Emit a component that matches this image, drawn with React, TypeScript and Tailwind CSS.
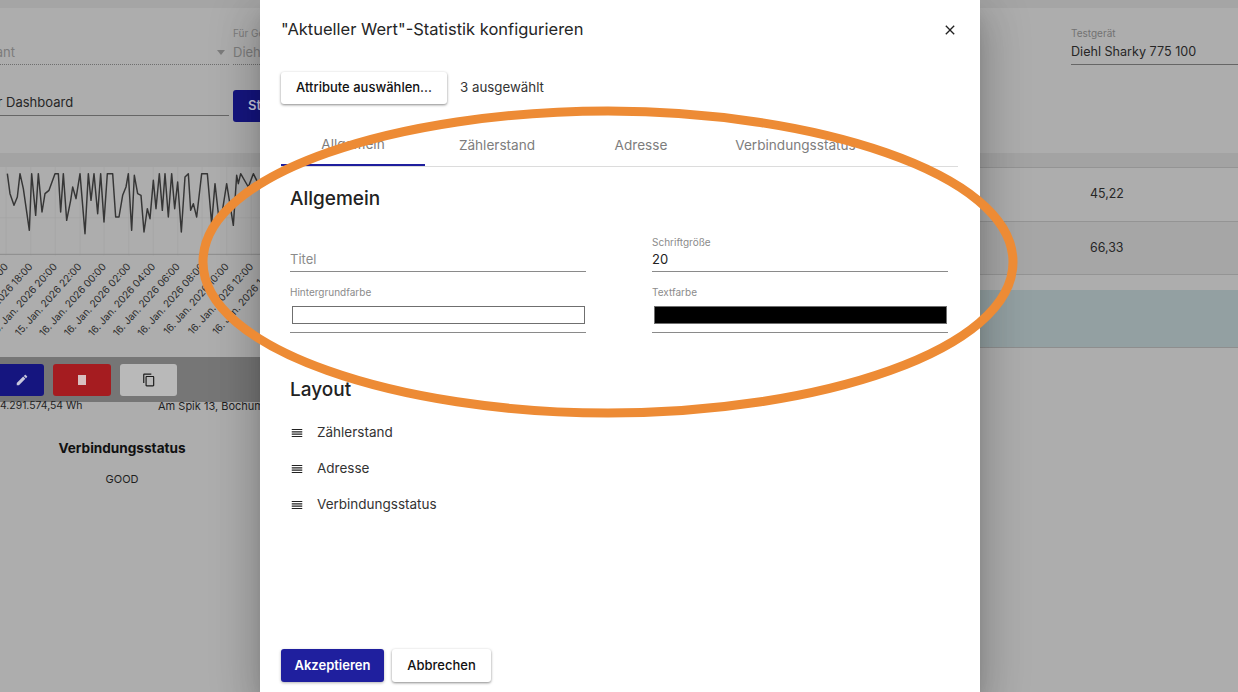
import type { ReactNode } from 'react';

const CHART_LINE =
  '22,20 30,80 42,115 52,90 60,20 70,65 88,190 95,20 107,145 115,20 126,135 135,80 147,70 165,20 175,20 182,135 190,20 200,160 212,100 218,60 228,95 240,20 255,200 265,20 273,100 282,20 293,140 302,20 312,165 322,20 338,20 347,150 357,150 368,85 378,60 385,20 395,190 403,25 413,80 423,85 432,195 442,125 450,155 460,40 468,125 478,20 487,130 495,20 505,150 515,20 524,125 533,45 544,195 555,30 565,20 572,130 580,110 590,150 605,20 622,20 635,170 645,50 655,140 665,145 680,50 700,175 710,25 715,50 722,20 745,60 760,20 780,60';

const TICKS = [18, 92, 166, 240, 312, 386, 460, 533, 606, 680, 754];
const TICK_LABELS = [
  '15. Jan. 2026 16:00',
  '15. Jan. 2026 18:00',
  '15. Jan. 2026 20:00',
  '15. Jan. 2026 22:00',
  '16. Jan. 2026 00:00',
  '16. Jan. 2026 02:00',
  '16. Jan. 2026 04:00',
  '16. Jan. 2026 06:00',
  '16. Jan. 2026 08:00',
  '16. Jan. 2026 10:00',
  '16. Jan. 2026 12:00',
  '16. Jan. 2026 14:00',
];

const CARD_SHADOW = 'shadow-[0_1px_3px_rgba(0,0,0,0.35),0_1px_2px_rgba(0,0,0,0.15)]';

function Chart() {
  return (
    <svg width="260" height="180" viewBox="0 0 780 540" className="block" style={{ fontFamily: 'Inter, sans-serif' }}>
      {TICKS.map((x) => (
        <line key={x} x1={x} y1="0" x2={x} y2="265" stroke="#a4a4a4" strokeWidth="2" />
      ))}
      <line x1="0" y1="152" x2="780" y2="152" stroke="#a4a4a4" strokeWidth="2" />
      <line x1="0" y1="262" x2="780" y2="262" stroke="#8c8c8c" strokeWidth="3" />
      <polyline points={CHART_LINE} fill="none" stroke="#363636" strokeWidth="4.4" strokeLinejoin="round" />
      {TICK_LABELS.map((label, i) => (
        <text
          key={label}
          textAnchor="end"
          fontSize="30"
          fill="#2c2c2c"
          transform={`translate(${18 + i * 73.6 + 8} 300) rotate(-48)`}
        >
          {label}
        </text>
      ))}
    </svg>
  );
}

function ToolButton({ className, children }: { className: string; children: ReactNode }) {
  return <div className={`flex h-8 items-center justify-center rounded-[3px] ${className}`}>{children}</div>;
}

function Background() {
  return (
    <div className="flex h-full flex-col bg-[#adadad] text-[#262626]">
      <div className="h-2 bg-[#a5a5a5]" />

      <div className="flex h-[145px] justify-between overflow-hidden">
        <div className="w-[420px] shrink-0">
          <div className="mt-[19px] flex gap-1">
            <div className="flex h-[38px] w-[229px] items-end border-b border-dotted border-[#6e6e6e] pb-[4px]">
              <span className="-ml-[39px] text-[13px] leading-4 text-[#7c7c7c]">Mandant</span>
              <span className="mb-[5px] ml-auto mr-[4px] h-0 w-0 border-x-[4px] border-t-[5px] border-x-transparent border-t-[#7c7c7c]" />
            </div>
            <div className="flex h-[38px] flex-1 flex-col border-b border-dotted border-[#6e6e6e]">
              <span className="text-[10px] leading-3 text-[#7c7c7c]">Für Gerät</span>
              <span className="mt-[5px] text-[13px] leading-4 text-[#7c7c7c]">Diehl</span>
            </div>
          </div>
          <div className="mt-[25px] flex gap-1">
            <div className="flex h-[26px] w-[229px] items-end border-b border-[#666] pb-[5px]">
              <span className="-ml-[15px] text-[13px] leading-4">für Dashboard</span>
            </div>
            <div className="flex h-8 w-24 items-center rounded-[3px] bg-[#15157f] pl-[15px] text-[13px] font-semibold text-[#c8c8dc]">
              Statistik
            </div>
          </div>
        </div>
        <div className="mt-[19px] h-[38px] w-[167px] shrink-0 border-b border-[#666]">
          <div className="text-[10px] leading-3 text-[#727272]">Testgerät</div>
          <div className="mt-[5px] text-[12.6px] leading-4">Diehl Sharky 775 100</div>
        </div>
      </div>

      <div className="h-[14px] bg-[#a3a3a3]" />

      <div className="flex flex-1 justify-between overflow-hidden">
        <div className="w-[300px] shrink-0">
          <div className="h-[190px] overflow-hidden bg-[#adadad]">
            <Chart />
          </div>
          <div className="flex h-[45px] items-center gap-[9px] bg-[#767676] pl-0">
            <ToolButton className="w-11 rounded-l-none bg-[#15157f]">
              <svg width="14" height="14" viewBox="0 0 24 24" fill="#c8c8dc">
                <path d="M3 17.25V21h3.75L17.81 9.94l-3.75-3.75L3 17.25zM20.71 7.04c.39-.39.39-1.02 0-1.41l-2.34-2.34c-.39-.39-1.02-.39-1.41 0l-1.83 1.83 3.75 3.75 1.83-1.83z" />
              </svg>
            </ToolButton>
            <ToolButton className="w-[58px] bg-[#a51c20]">
              <span className="block h-[10px] w-2 bg-[#d8c0c0]" />
            </ToolButton>
            <ToolButton className="w-[57px] bg-[#b9b9b9]">
              <svg width="14" height="14" viewBox="0 0 24 24" fill="#1c1c1c">
                <path d="M16 1H4c-1.1 0-2 .9-2 2v14h2V3h12V1zm3 4H8c-1.1 0-2 .9-2 2v14c0 1.1.9 2 2 2h11c1.1 0 2-.9 2-2V7c0-1.1-.9-2-2-2zm0 16H8V7h11v14z" />
              </svg>
            </ToolButton>
          </div>
          <div className="flex text-[10.4px] leading-[8px] text-[#1f1f1f]">
            <span className="w-[158px] shrink-0">4.291.574,54 Wh</span>
            <span className="whitespace-nowrap text-[11px]">Am Spik 13, Bochum</span>
          </div>
          <div className="mt-[28px] w-[244px] text-center text-[13.6px] font-bold leading-5 text-[#111]">Verbindungsstatus</div>
          <div className="mt-[13px] w-[244px] text-center text-[11px] leading-4 text-[#1f1f1f]">GOOD</div>
        </div>

        <div className="w-[600px] shrink-0">
          <div className="flex h-[54px] items-center border-t border-[#949494] pl-[452px] text-[12.4px]">45,22</div>
          <div className="flex h-[54px] items-center border-y border-[#949494] bg-[#a6a6a6] pl-[452px] text-[12.4px]">66,33</div>
          <div className="mt-[15px] h-[58px] border-b border-[#8e8e8e] bg-[#93a0a2]" />
        </div>
      </div>
    </div>
  );
}

function TextField({ label, value, placeholder }: { label?: string; value?: string; placeholder?: string }) {
  return (
    <div className="flex h-[39px] flex-col justify-end border-b border-[#8a8a8a] pb-[2px]">
      {label && <span className="mb-[1px] text-[10px] leading-3 text-[#8b8b8b]">{label}</span>}
      <span className={`text-[13px] leading-5 ${value ? 'text-[#222]' : 'text-[#8b8b8b]'}`}>{value ?? placeholder}</span>
    </div>
  );
}

function ColorField({ label, swatch }: { label: string; swatch: string }) {
  return (
    <div className="mt-[14px] h-[47px] border-b border-[#8a8a8a]">
      <div className="text-[10px] leading-3 text-[#8b8b8b]">{label}</div>
      <div className={`ml-[2px] mr-[1px] mt-[8px] h-[18px] border border-[#6f6f6f] ${swatch}`} />
    </div>
  );
}

function LayoutRow({ label }: { label: string }) {
  return (
    <div className="flex h-9 items-center gap-[13px]">
      <svg width="14" height="14" viewBox="0 0 24 24" fill="#222" className="mt-[2px]">
        <path d="M3 15h18v-2H3v2zm0 4h18v-2H3v2zm0-8h18V9H3v2zm0-6v2h18V5H3z" />
      </svg>
      <span className="text-[13.5px] text-[#333]">{label}</span>
    </div>
  );
}

function Dialog() {
  return (
    <div className="absolute inset-y-0 left-[260px] flex w-[720px] flex-col bg-white pl-[21px] pr-[22px] shadow-[0_11px_15px_-7px_rgba(0,0,0,0.2),0_24px_38px_3px_rgba(0,0,0,0.14),0_9px_46px_8px_rgba(0,0,0,0.12)]">
      <div className="flex h-[58px] items-center justify-between">
        <h2 className="text-[16.5px] font-normal text-[#262626]">"Aktueller Wert"-Statistik konfigurieren</h2>
        <svg width="16" height="16" viewBox="0 0 24 24" fill="#222" className="mt-[2px]">
          <path d="M19 6.41 17.59 5 12 10.59 6.41 5 5 6.41 10.59 12 5 17.59 6.41 19 12 13.41 17.59 19 19 17.59 13.41 12z" />
        </svg>
      </div>

      <div className="mt-[14px] flex items-center gap-[13px]">
        <div className={`flex h-8 w-[166px] items-center justify-center rounded-[3px] bg-white text-[13px] font-medium text-[#111] ${CARD_SHADOW}`}>
          Attribute auswählen...
        </div>
        <span className="text-[13.3px] text-[#333]">3 ausgewählt</span>
      </div>

      <div className="mt-[21px] flex h-[42px] border-b border-[#dcdcdc] text-[13.6px] text-[#7d7d7d]">
        <div className="flex w-[144px] items-center justify-center border-b-2 border-[#1f1f9e]">Allgemein</div>
        <div className="flex w-[144px] items-center justify-center">Zählerstand</div>
        <div className="flex w-[144px] items-center justify-center">Adresse</div>
        <div className="flex w-[165px] items-center justify-center">Verbindungsstatus</div>
      </div>

      <div className="pl-[9px] pr-[10px]">
        <h3 className="mt-[20px] text-[19px] font-medium leading-6 text-[#222]">Allgemein</h3>
        <div className="mt-[22px] grid grid-cols-[296px_296px] justify-between">
          <div>
            <TextField placeholder="Titel" />
            <ColorField label="Hintergrundfarbe" swatch="bg-white" />
          </div>
          <div>
            <TextField label="Schriftgröße" value="20" />
            <ColorField label="Textfarbe" swatch="bg-black" />
          </div>
        </div>
        <h3 className="mt-[45px] text-[19px] font-medium leading-6 text-[#222]">Layout</h3>
        <div className="mt-[12px]">
          <LayoutRow label="Zählerstand" />
          <LayoutRow label="Adresse" />
          <LayoutRow label="Verbindungsstatus" />
        </div>
      </div>

      <div className="mb-[10px] mt-auto flex gap-2">
        <div className="flex h-[33px] w-[103px] items-center justify-center rounded-[3px] bg-[#1f1f9e] text-[13px] font-semibold text-white shadow-[0_1px_3px_rgba(0,0,0,0.3)]">
          Akzeptieren
        </div>
        <div className={`flex h-[33px] w-[99px] items-center justify-center rounded-[3px] bg-white text-[13px] font-medium text-[#111] ${CARD_SHADOW}`}>
          Abbrechen
        </div>
      </div>
    </div>
  );
}

export default function App() {
  return (
    <div className="relative h-[692px] w-[1238px] overflow-hidden font-['Inter',sans-serif]">
      <Background />
      <Dialog />
      {/* hand-drawn annotation on top of the screenshot */}
      <svg className="pointer-events-none absolute inset-0" width="1238" height="692">
        <path
          d="M203 262C203 172 400 111 608 111C810 111 1013 172 1013 262C1013 350 820 413 608 413C400 413 203 350 203 262Z"
          fill="none"
          stroke="#ed8b35"
          strokeWidth="9"
        />
      </svg>
    </div>
  );
}
